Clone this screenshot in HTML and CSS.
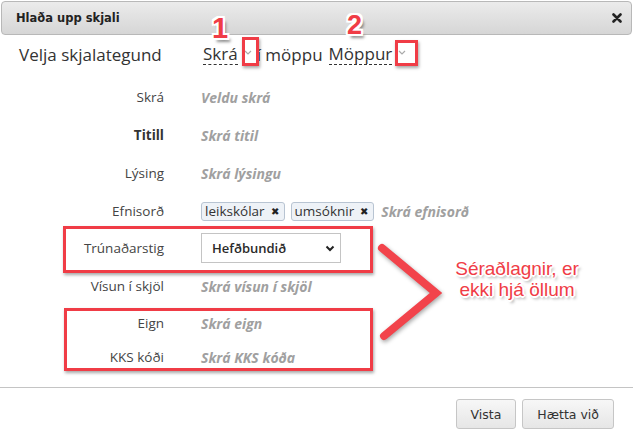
FILE: index.html
```html
<!DOCTYPE html>
<html lang="is">
<head>
    <meta charset="UTF-8">
    <meta name="viewport" content="width=device-width, initial-scale=1.0">
    <title>Hlaða upp skjali</title>
    <link rel="stylesheet" href="styles.css">
</head>
<body>
    <div class="dialog">
        <header class="dialog-header">
            <span class="dialog-title">Hlaða upp skjali</span>
            <button class="dialog-close" title="Loka">
                <svg width="10" height="10" viewBox="0 0 10 10"><path d="M1.5 1.5 L8.5 8.5 M8.5 1.5 L1.5 8.5" stroke="#222" stroke-width="2.6" stroke-linecap="round"/></svg>
            </button>
        </header>

        <div class="dialog-body">
            <div class="doc-type">
                <span class="doc-type-label">Velja skjalategund</span>
                <span class="picker">
                    <span class="picker-value">Skrá</span>
                    <svg class="picker-caret" width="8" height="5" viewBox="0 0 8 5"><path d="M1 1 L4 4 L7 1" fill="none" stroke="#aaa" stroke-width="1.2"/></svg>
                </span>
                <span class="doc-type-sep">í möppu</span>
                <span class="picker">
                    <span class="picker-value">Möppur</span>
                    <svg class="picker-caret" width="8" height="5" viewBox="0 0 8 5"><path d="M1 1 L4 4 L7 1" fill="none" stroke="#aaa" stroke-width="1.2"/></svg>
                </span>
            </div>

            <div class="fields">
                <div class="field">
                    <span class="field-label">Skrá</span>
                    <span class="placeholder">Veldu skrá</span>
                </div>
                <div class="field">
                    <span class="field-label required">Titill</span>
                    <span class="placeholder">Skrá titil</span>
                </div>
                <div class="field">
                    <span class="field-label">Lýsing</span>
                    <span class="placeholder">Skrá lýsingu</span>
                </div>
                <div class="field">
                    <span class="field-label">Efnisorð</span>
                    <div class="tags">
                        <span class="tag">leikskólar <span class="tag-remove">&#10006;</span></span>
                        <span class="tag">umsóknir <span class="tag-remove">&#10006;</span></span>
                        <span class="placeholder">Skrá efnisorð</span>
                    </div>
                </div>
                <div class="field field-select">
                    <span class="field-label">Trúnaðarstig</span>
                    <div class="select">
                        <span>Hefðbundið</span>
                        <svg width="10" height="7" viewBox="0 0 10 7"><path d="M1.5 1.5 L5 5 L8.5 1.5" fill="none" stroke="#222" stroke-width="2"/></svg>
                    </div>
                </div>
                <div class="field field-tall">
                    <span class="field-label">Vísun í skjöl</span>
                    <span class="placeholder">Skrá vísun í skjöl</span>
                </div>
                <div class="field field-short">
                    <span class="field-label">Eign</span>
                    <span class="placeholder">Skrá eign</span>
                </div>
                <div class="field field-short">
                    <span class="field-label">KKS kóði</span>
                    <span class="placeholder">Skrá KKS kóða</span>
                </div>
            </div>
        </div>

        <footer class="dialog-footer">
            <button class="btn">Vista</button>
            <button class="btn">Hætta við</button>
        </footer>
    </div>

    <!-- skýringar ofan á glugganum -->
    <div class="notes">
        <span class="note-num note-num-1">1</span>
        <span class="note-num note-num-2">2</span>
        <span class="note-box note-caret-1"></span>
        <span class="note-box note-caret-2"></span>
        <span class="note-box note-row-1"></span>
        <span class="note-box note-row-2"></span>
        <svg class="note-arrow" width="80" height="110" viewBox="0 0 80 110">
            <polyline points="8,8 62,53 10,96" fill="none" stroke="#f2434b" stroke-width="8" stroke-linecap="round" stroke-linejoin="miter"/>
        </svg>
        <span class="note-text">Séraðlagnir, er<br>ekki hjá öllum</span>
    </div>
</body>
</html>
```

FILE: styles.css
```css
/* Grunnur */
body {
    margin: 0;
    font-family: 'Open Sans', 'Noto Sans', sans-serif;
    color: #333;
    background: #fff;
}

.dialog {
    width: 633px;
    position: relative;
}

/* Haus gluggans */
.dialog-header {
    margin: 1px 1px 0 1px;
    height: 34px;
    box-sizing: border-box;
    display: flex;
    align-items: center;
    justify-content: space-between;
    padding: 0 8px 0 14px;
    background: linear-gradient(to bottom, #ebebeb, #d6d6d6);
    border: 1px solid #b8b8b8;
    border-radius: 4px;
}

.dialog-title {
    font-family: 'DejaVu Sans', Verdana, sans-serif;
    font-size: 11.5px;
    font-weight: 700;
    color: #222;
}

.dialog-close {
    border: none;
    background: none;
    padding: 0;
    width: 12px;
    height: 12px;
    display: flex;
    align-items: center;
    justify-content: center;
    cursor: pointer;
}

/* Skjalategund */
.doc-type {
    height: 36px;
    margin-top: 1px;
    margin-bottom: 6px;
    display: flex;
    align-items: center;
    padding-left: 19px;
    font-size: 17px;
    color: #333;
}

.doc-type-label {
    width: 184px;
}

.picker {
    display: inline-flex;
    align-items: center;
}

.picker-value {
    border-bottom: 1px dashed #333;
    line-height: 20px;
}

.picker-caret {
    margin: 0 5px 3px 6px;
}

.doc-type-sep {
    margin-right: 6px;
}

/* Svæði */
.fields {
    display: flex;
    flex-direction: column;
}

.field {
    display: grid;
    grid-template-columns: 164px 1fr;
    column-gap: 37px;
    align-items: center;
    height: 38px;
    font-size: 13.5px;
}

.field-select {
    height: 36px;
}

.field-tall {
    height: 40px;
}

.field-short {
    height: 34px;
}

.field-label {
    text-align: right;
    color: #444;
}

.field-label.required {
    font-weight: 700;
    color: #333;
}

.placeholder {
    font-size: 14px;
    font-style: italic;
    font-weight: 700;
    color: #a0a0a0;
}

.tags {
    display: flex;
    align-items: center;
    gap: 6px;
}

.tag {
    display: inline-flex;
    align-items: center;
    gap: 6px;
    height: 17px;
    padding: 0 5px 0 3px;
    background: #eef2f7;
    border: 1px solid #b8c4d2;
    border-radius: 3px;
    color: #333;
    font-size: 13.5px;
}

.tag-remove {
    font-size: 10px;
    color: #222;
}

.tags .placeholder {
    margin-left: 1px;
}

.select {
    width: 140px;
    height: 30px;
    box-sizing: border-box;
    border: 1px solid #c4c4c4;
    display: flex;
    align-items: center;
    justify-content: space-between;
    padding: 0 5px 0 10px;
    font-size: 13px;
    font-weight: 600;
    color: #2a2a2a;
}

/* Fótur */
.dialog-footer {
    margin-top: 13px;
    border-top: 1px solid #c4c4c4;
    padding: 11px 19px 0 0;
    display: flex;
    justify-content: flex-end;
    gap: 6px;
}

.btn {
    height: 30px;
    padding: 0 14px;
    font-family: 'DejaVu Sans', Verdana, sans-serif;
    font-size: 12.5px;
    color: #333;
    background: linear-gradient(to bottom, #f7f7f7, #e6e6e6);
    border: 1px solid #c6c6c6;
    border-radius: 3px;
}

/* Skýringar */
.notes {
    position: absolute;
    inset: 0;
    pointer-events: none;
    font-family: 'Liberation Sans', Arial, sans-serif;
}

.note-box {
    position: absolute;
    border: 3px solid #f03c46;
    box-shadow: 1px 2px 3px rgba(0, 0, 0, 0.35);
}

.note-caret-1 {
    left: 242px;
    top: 37px;
    width: 11px;
    height: 23px;
}

.note-caret-2 {
    left: 395px;
    top: 40px;
    width: 17px;
    height: 20px;
}

.note-row-1 {
    left: 63px;
    top: 226px;
    width: 304px;
    height: 41px;
}

.note-row-2 {
    left: 64px;
    top: 308px;
    width: 303px;
    height: 57px;
}

.note-num {
    position: absolute;
    font-size: 29px;
    font-weight: 700;
    line-height: 22px;
    color: #f03c46;
    text-shadow:
        -2px 0 0 #fff, 2px 0 0 #fff, 0 -2px 0 #fff, 0 2px 0 #fff,
        -2px -2px 0 #fff, 2px -2px 0 #fff, -2px 2px 0 #fff, 2px 2px 0 #fff,
        3px 4px 3px rgba(0, 0, 0, 0.45);
}

.note-num-1 {
    left: 212px;
    top: 17px;
}

.note-num-2 {
    left: 347px;
    top: 15px;
    font-size: 27px;
    line-height: 21px;
}

.note-arrow {
    position: absolute;
    left: 374px;
    top: 240px;
    filter: drop-shadow(1px 2px 2px rgba(0, 0, 0, 0.35));
}

.note-text {
    position: absolute;
    left: 446px;
    top: 258px;
    width: 142px;
    text-align: center;
    font-size: 19px;
    line-height: 21px;
    color: #f03c46;
    text-shadow:
        -2px 0 0 #fff, 2px 0 0 #fff, 0 -2px 0 #fff, 0 2px 0 #fff,
        -1px -1px 0 #fff, 1px -1px 0 #fff, -1px 1px 0 #fff, 1px 1px 0 #fff,
        2px 3px 3px rgba(0, 0, 0, 0.4);
}
```
